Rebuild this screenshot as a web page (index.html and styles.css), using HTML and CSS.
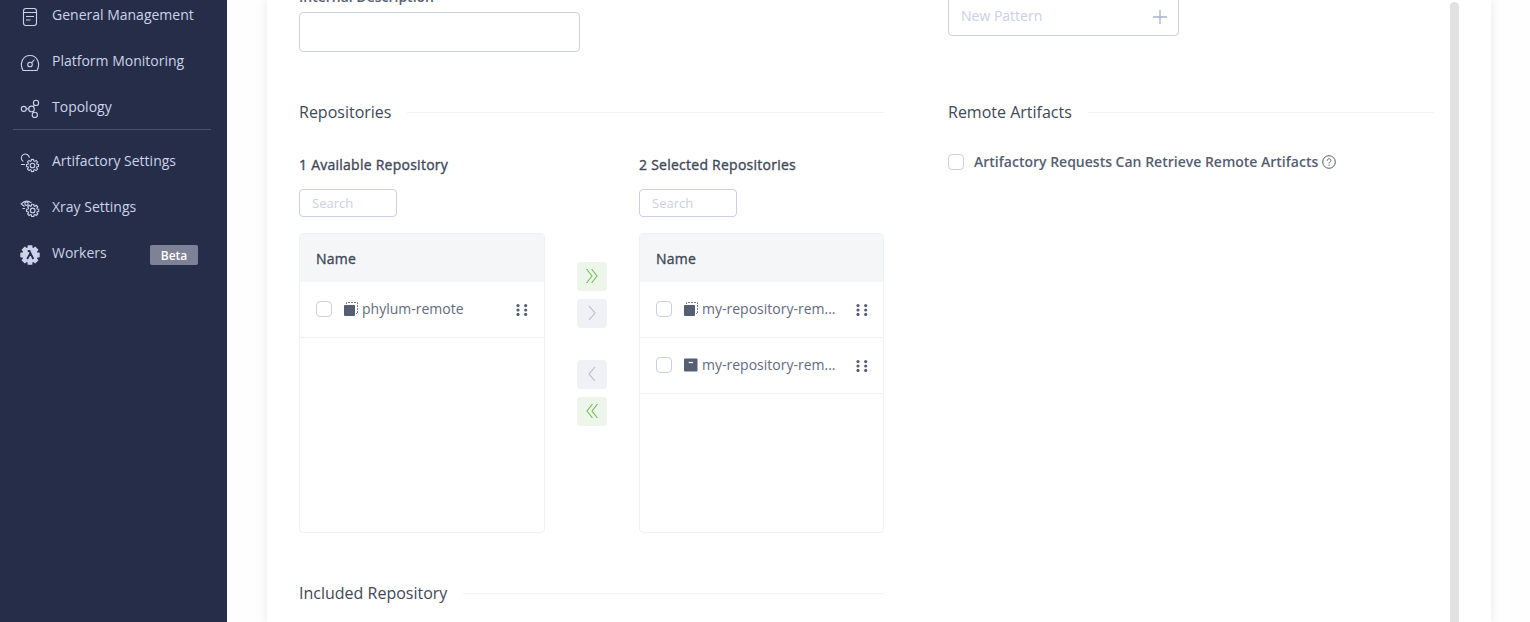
FILE: index.html
```
<!DOCTYPE html>
<html lang="en">
<head>
<meta charset="utf-8">
<title>Edit Repository</title>
<link rel="stylesheet" href="styles.css">
</head>
<body>
<svg class="sprite" width="0" height="0">
  <symbol id="gear" viewBox="-7 -7 14 14">
    <path d="M6.1-1.08V1.08L4.52 1.3L4.11 2.28L5.08 3.56L3.56 5.08L2.28 4.11L1.3 4.52L1.08 6.1H-1.08L-1.3 4.52L-2.28 4.11L-3.56 5.08L-5.08 3.56L-4.11 2.28L-4.52 1.3L-6.1 1.08V-1.08L-4.52-1.3L-4.11-2.28L-5.08-3.56L-3.56-5.08L-2.28-4.11L-1.3-4.52L-1.08-6.1H1.08L1.3-4.52L2.28-4.11L3.56-5.08L5.08-3.56L4.11-2.28L4.52-1.3Z"/>
  </symbol>
  <symbol id="grip" viewBox="0 0 12 12">
    <g fill="#555e72"><circle cx="2" cy="1.6" r="1.6"/><circle cx="2" cy="6" r="1.6"/><circle cx="2" cy="10.4" r="1.6"/><circle cx="9.7" cy="1.6" r="1.6"/><circle cx="9.7" cy="6" r="1.6"/><circle cx="9.7" cy="10.4" r="1.6"/></g>
  </symbol>
  <symbol id="remote" viewBox="0 0 14 14">
    <rect x="0" y="3" width="11" height="11" rx="1" fill="#555e72"/>
    <path d="M2.5 2V.5H13.5V11.5H12" fill="none" stroke="#555e72" stroke-width=".8" stroke-dasharray="2 1"/>
  </symbol>
  <symbol id="local" viewBox="0 0 14 14">
    <rect x="0" y="0.5" width="13.5" height="13" rx="1" fill="#555e72"/>
    <path d="M4.7 4.5H9" stroke="#fff" stroke-width="1.2"/>
  </symbol>
</svg>
<div class="app">
  <nav class="sidebar">
    <a class="nav-item">
      <svg class="nav-icon" viewBox="0 0 20 20"><rect x="3.5" y="1.5" width="13" height="17" rx="2.5"/><path d="M3.5 5.5H16.5M6 9.5H14M6 13H10.5"/></svg>
      <span>General Management</span>
    </a>
    <a class="nav-item">
      <svg class="nav-icon" viewBox="0 0 20 20"><path d="M3 17.500C-.5 11.500 2 2.500 10 2.500S20.500 11.500 17 17.500Z"/><circle cx="10" cy="11.500" r="2.300"/><path d="M11.500 9.900L14.500 6.500"/></svg>
      <span>Platform Monitoring</span>
    </a>
    <a class="nav-item">
      <svg class="nav-icon" viewBox="0 0 20 20"><circle cx="3.800" cy="9.900" r="2.500"/><circle cx="11.500" cy="9.900" r="2.800"/><circle cx="16" cy="3.900" r="2.600"/><circle cx="14.800" cy="15.900" r="2.600"/><path d="M6.300 9.900H8.700M13.200 7.600L14.500 6M12.700 12.400L13.600 13.600"/></svg>
      <span>Topology</span>
    </a>
    <div class="nav-divider"></div>
    <a class="nav-item">
      <svg class="nav-icon" viewBox="0 0 20 20"><path d="M3.300 8.500A4 4 0 1 1 9.300 4.800M1 11.500H5"/><use href="#gear" x="5.500" y="5.500" width="14" height="14"/><circle cx="12.500" cy="12.500" r="2.300"/></svg>
      <span>Artifactory Settings</span>
    </a>
    <a class="nav-item">
      <svg class="nav-icon" viewBox="0 0 20 20"><path d="M4.500 7.500L1.200 4.900Q6 -.2 11.500 3.900M2.500 9.500H5"/><circle cx="6.500" cy="4.700" r="1.700"/><use href="#gear" x="5.700" y="4.400" width="14" height="14"/><circle cx="12.700" cy="11.400" r="2.300"/></svg>
      <span>Xray Settings</span>
    </a>
    <a class="nav-item">
      <svg class="nav-icon" viewBox="0 0 20 20"><g class="solid-gear"><use href="#gear" x="-.2" y="-.2" width="20.400" height="20.400"/></g><path class="lambda" d="M7.800 6H9.500L13.300 14M10.200 8.500L7.200 14"/></svg>
      <span>Workers</span>
      <span class="badge">Beta</span>
    </a>
  </nav>
  <main class="page">
    <section class="card">
      <div class="columns">
        <div class="col-left">
          <label class="field-label">Internal Description</label>
          <div class="input"></div>
          <h2 class="section-title">Repositories</h2>
          <div class="transfer">
            <div class="list">
              <h3 class="list-title">1 Available Repository</h3>
              <div class="search">Search</div>
              <div class="table">
                <div class="table-head">Name</div>
                <div class="row"><span class="checkbox"></span><svg class="repo-icon"><use href="#remote"/></svg><span class="repo-name">phylum-remote</span><svg class="grip"><use href="#grip"/></svg></div>
              </div>
            </div>
            <div class="transfer-buttons">
              <span class="move active"><svg viewBox="0 0 14 14"><path d="M1.500 0L7 7L1.500 14M6.500 0L12 7L6.500 14"/></svg></span>
              <span class="move"><svg viewBox="0 0 14 14"><path d="M4 0L10 7L4 14"/></svg></span>
              <span class="move back"><svg viewBox="0 0 14 14"><path d="M10 0L4 7L10 14"/></svg></span>
              <span class="move active"><svg viewBox="0 0 14 14"><path d="M7.500 0L2 7L7.500 14M12.500 0L7 7L12.500 14"/></svg></span>
            </div>
            <div class="list">
              <h3 class="list-title">2 Selected Repositories</h3>
              <div class="search">Search</div>
              <div class="table">
                <div class="table-head">Name</div>
                <div class="row"><span class="checkbox"></span><svg class="repo-icon"><use href="#remote"/></svg><span class="repo-name">my-repository-rem...</span><svg class="grip"><use href="#grip"/></svg></div>
                <div class="row"><span class="checkbox"></span><svg class="repo-icon"><use href="#local"/></svg><span class="repo-name">my-repository-rem...</span><svg class="grip"><use href="#grip"/></svg></div>
              </div>
            </div>
          </div>
          <h2 class="section-title included">Included Repository</h2>
        </div>
        <div class="col-right">
          <div class="pattern"><span>New Pattern</span><svg class="plus" viewBox="0 0 14 14"><path d="M0 7H14M7 0V14"/></svg></div>
          <h2 class="section-title">Remote Artifacts</h2>
          <div class="option"><span class="checkbox"></span><span class="option-label">Artifactory Requests Can Retrieve Remote Artifacts</span><svg class="help" viewBox="0 0 14 14"><circle cx="7" cy="7" r="6.300"/><path d="M5.200 5.700C5.200 3.200 8.900 3.300 8.900 5.400C8.900 6.900 7.100 6.800 7.100 8.500M7.100 9.600V10.800"/></svg></div>
        </div>
      </div>
      <div class="scrollbar"></div>
    </section>
  </main>
</div>
</body>
</html>
```
FILE: styles.css
```
* { box-sizing: border-box; }
body { margin: 0; font-family: "Open Sans", sans-serif; font-size: 14px; line-height: 20px; color: #414857; background: #fdfdfd; overflow: hidden; }
.sprite { display: block; }
.app { display: flex; height: 622px; overflow: hidden; }

.sidebar { width: 227px; flex: none; background: #252d49; color: #ccd3e8; overflow: hidden; }
.nav-item { display: flex; align-items: center; height: 46px; padding: 0 29px 0 20px; }
.nav-item:first-child { margin-top: -8px; }
.nav-icon { width: 20px; height: 20px; margin: 4px 12px 0 0; fill: none; stroke: #ccd3e8; stroke-width: 1.1; }
.solid-gear { fill: #ccd3e8; }
.lambda { stroke: #252d49; stroke-width: 1.8; }
.nav-divider { height: 1px; margin: -1px 16px 8px 13px; background: #4a516a; }
.badge { margin: 4px 0 0 auto; width: 48px; height: 20px; border-radius: 2px; background: #7f8297; color: #fff; font-size: 12px; font-weight: 600; text-align: center; line-height: 21px; }

.page { flex: 1; padding: 0 39px 0 40px; background: #fefefe; }
.card { display: flex; height: 622px; overflow: hidden; background: #fff; box-shadow: 0 0 10px rgba(0, 0, 0, .09); }
.columns { flex: 1; display: flex; gap: 64px; padding: 0 16px 0 32px; }
.col-left { width: 585px; flex: none; }
.col-right { flex: 1; }
.scrollbar { width: 9px; height: 640px; margin: 2px 32px 0 0; flex: none; border-radius: 5px; background: #e2e2e2; }

.field-label { display: block; margin-top: -13px; height: 25px; font-weight: 600; color: #555e72; }
.input { width: 281px; height: 40px; border: 1px solid #cbcee4; border-radius: 4px; }
.section-title { display: flex; align-items: center; gap: 16px; height: 24px; margin: 48px 0 0; font-size: 16px; font-weight: 400; line-height: 24px; white-space: nowrap; }
.section-title::after { content: ""; flex: 1; height: 1px; background: #f1f1f7; }

.transfer { display: flex; height: 378px; margin-top: 31px; }
.list { display: flex; flex-direction: column; width: 246px; }
.list:last-child { width: 245px; }
.list-title, .table-head { font-size: 14px; font-weight: 400; letter-spacing: .25px; -webkit-text-stroke: .35px #414857; }
.list-title { margin: 0 0 14px; line-height: 20px; }
.search { width: 98px; height: 28px; padding: 0 12px; border: 1px solid #cbcee4; border-radius: 4px; color: #cbd0e4; font-size: 13px; line-height: 26px; }
.table { height: 300px; margin-top: 16px; border: 1px solid #f0f1f7; border-radius: 4px; overflow: hidden; }
.table-head { height: 48px; padding: 0 16px; background: #f4f6f8; line-height: 50px; }
.row { display: flex; align-items: center; height: 56px; padding: 0 16px 2px; border-bottom: 1px solid #f0f1f7; color: #646b7d; }
.checkbox { width: 16px; height: 16px; flex: none; border: 1px solid #cbcee4; border-radius: 4px; background: #fff; }
.repo-icon { width: 14px; height: 14px; flex: none; margin: 1px 4px 0 12px; }
.repo-name { flex: 1; white-space: nowrap; }
.grip { width: 12px; height: 12px; flex: none; margin-top: 2px; }
.list:last-child .row { padding-right: 15px; }

.transfer-buttons { width: 94px; display: flex; flex-direction: column; align-items: center; gap: 8px; padding-top: 107px; }
.move { display: flex; align-items: center; justify-content: center; width: 30px; height: 29px; border-radius: 4px; background: #f0f1f7; }
.move svg { width: 14px; height: 14px; margin-top: -1px; fill: none; stroke: #b8bbc7; stroke-width: 1.1; }
.move.active { background: #eef6eb; }
.move.active svg { stroke: #6fbf58; }
.move.back { margin-top: 24px; }
.included { margin-top: 48px; }

.pattern { display: flex; align-items: center; justify-content: space-between; width: 231px; height: 40px; margin-top: -4px; padding: 0 12px; border: 1px solid #cbcee4; border-radius: 4px; color: #cbd0e4; }
.plus { width: 14px; height: 14px; margin: 1px -1px 0 0; stroke: #a9b3cc; stroke-width: 1.4; }
.col-right .section-title { margin-top: 64px; }
.option { display: flex; align-items: center; margin-top: 28px; height: 20px; }
.option .checkbox { margin: 0 10px 0 0; }
.option-label { font-weight: 600; color: #555e72; white-space: nowrap; }
.help { width: 14px; height: 14px; margin: -1px 0 0 4px; fill: none; stroke: #555e72; stroke-width: 1; }
```
